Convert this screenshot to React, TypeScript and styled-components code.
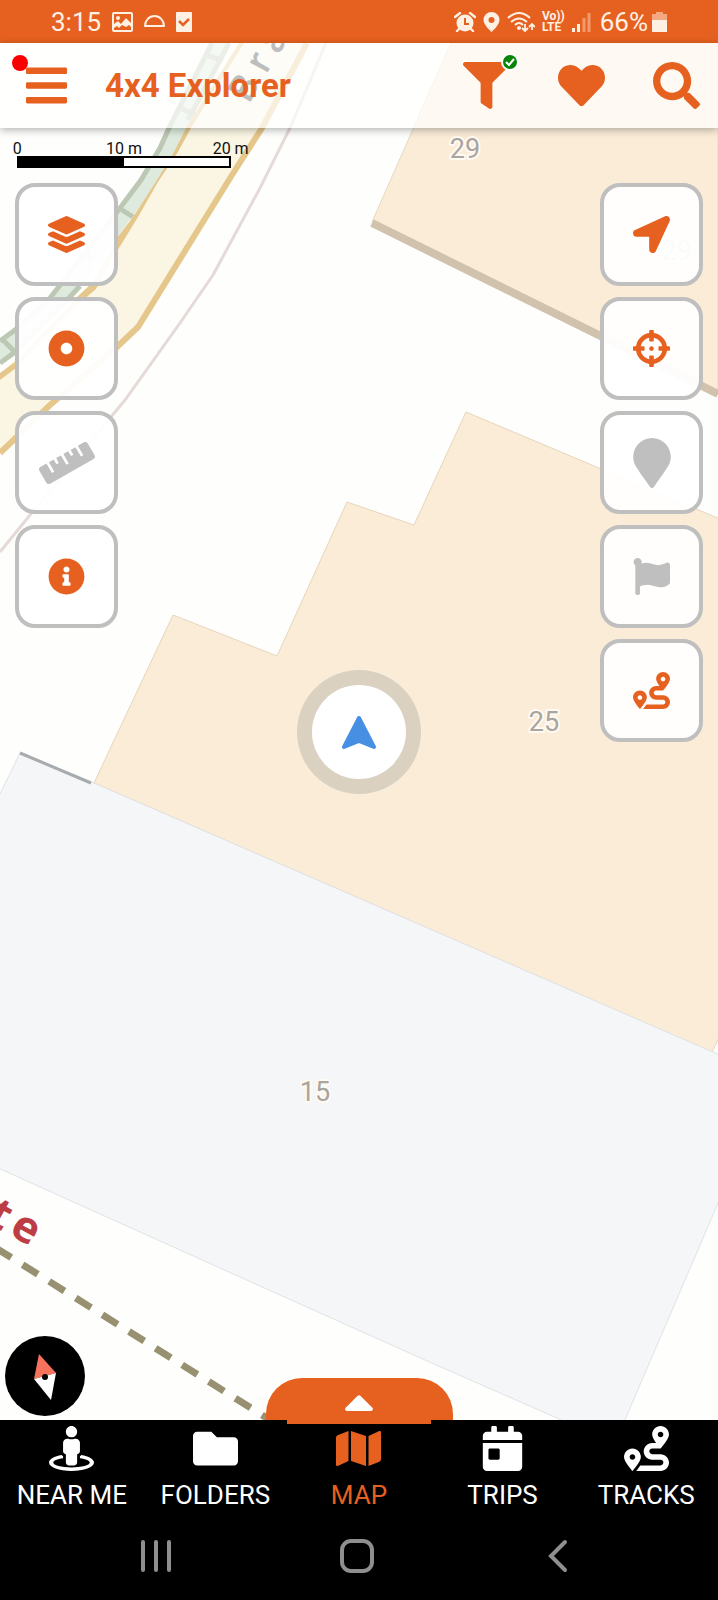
import React from "react";
import styled, { createGlobalStyle } from "styled-components";
import {
  FaBars,
  FaCalendarDay,
  FaCaretUp,
  FaCrosshairs,
  FaDotCircle,
  FaFilter,
  FaFlag,
  FaFolder,
  FaHeart,
  FaInfoCircle,
  FaLayerGroup,
  FaLocationArrow,
  FaMap,
  FaMapMarker,
  FaRoute,
  FaRuler,
  FaSearch,
  FaStreetView,
} from "react-icons/fa";
import type { IconType } from "react-icons";

const ORANGE = "#e66120";
const GREY = "#bfbfbf";

const GlobalStyle = createGlobalStyle`
  * { box-sizing: border-box; }
  body { margin: 0; background: #000; font-family: Roboto, "Noto Sans", sans-serif; }
  button { margin: 0; padding: 0; border: 0; background: none; font: inherit; color: inherit; cursor: pointer; }
  svg { display: block; flex: none; }
`;

const Screen = styled.div`
  display: flex;
  flex-direction: column;
  min-height: 100vh;
`;

/* ---------- status bar ---------- */

const StatusBar = styled.div`
  display: flex;
  align-items: center;
  justify-content: space-between;
  height: 43px;
  padding: 0 51px;
  background: ${ORANGE};
  color: #fff0e4;
  font-size: 26px;
`;

const StatusGroup = styled.div<{ $gap: number }>`
  display: flex;
  align-items: center;
  gap: ${(p) => p.$gap}px;
`;

const Volte = styled.span`
  display: flex;
  flex-direction: column;
  font-size: 12px;
  line-height: 11px;
  font-weight: 700;
`;

const Battery = styled.span`
  display: flex;
  align-items: center;
  gap: 4px;
  margin-left: 2px;
`;

/* ---------- map area ---------- */

const MapArea = styled.main`
  position: relative;
  display: flex;
  flex-direction: column;
  flex: 1;
  background: #fefefc;
`;

const MapCanvas = styled.svg`
  position: absolute;
  inset: 0;
  width: 100%;
  height: 100%;
`;

const Header = styled.header`
  position: relative;
  display: flex;
  align-items: center;
  height: 85px;
  padding: 0 18px 0 23px;
  background: rgba(255, 255, 255, 0.7);
  box-shadow: 0 2px 8px rgba(0, 0, 0, 0.3);
  color: ${ORANGE};
`;

const HeaderButton = styled.button`
  position: relative;
  display: flex;
  color: ${ORANGE};
`;

const Title = styled.h1`
  flex: 1;
  margin: 0 0 0 35px;
  font-size: 33px;
  line-height: 40px;
  font-weight: 700;
`;

const HeaderActions = styled.div`
  display: flex;
  gap: 48px;
`;

const UnreadDot = styled.span`
  position: absolute;
  top: -7px;
  left: -11px;
  width: 16px;
  height: 16px;
  border-radius: 50%;
  background: #fb0000;
`;

const ActiveBadge = styled.svg`
  position: absolute;
  top: -9px;
  right: -9px;
`;

const ScaleBar = styled.div`
  position: relative;
  width: 214px;
  margin: 11px 0 0 17px;
`;

const ScaleLabels = styled.div`
  display: grid;
  grid-template-columns: repeat(3, 1fr);
  height: 17px;
  margin: 0 -53px;
  font-size: 16px;
  line-height: 20px;
  text-align: center;
  color: #111;
`;

const ScaleTrack = styled.div`
  height: 12px;
  border: 2px solid #000;
  background: linear-gradient(90deg, #000 50%, #fff 50%);
`;

const Tools = styled.div`
  position: relative;
  display: flex;
  flex: 1;
  justify-content: space-between;
  padding: 15px 15px 0;
`;

const ToolColumn = styled.div`
  display: flex;
  flex-direction: column;
  gap: 11px;
`;

const ToolButton = styled.button<{ $muted?: boolean }>`
  display: flex;
  align-items: center;
  justify-content: center;
  width: 103px;
  height: 103px;
  border: 4px solid ${GREY};
  border-radius: 20px;
  background: rgba(255, 255, 255, 0.95);
  color: ${(p) => (p.$muted ? GREY : ORANGE)};
`;

const MapFooter = styled.div`
  position: relative;
  display: grid;
  grid-template-columns: 1fr auto 1fr;
  align-items: end;
`;

const CompassButton = styled.button`
  width: 80px;
  height: 80px;
  margin: 0 0 4px 5px;
`;

const PeekButton = styled.button`
  position: relative;
  display: flex;
  justify-content: center;
  width: 187px;
  height: 42px;
  border-radius: 36px 36px 0 0;
  background: ${ORANGE};
  color: #fff;

  &::after {
    content: "";
    position: absolute;
    top: 100%;
    left: 21px;
    right: 22px;
    height: 4px;
    background: ${ORANGE};
  }
`;

/* ---------- bottom bars ---------- */

const TabBar = styled.nav`
  display: grid;
  grid-template-columns: repeat(5, 1fr);
  padding-top: 6px;
  background: #000;
`;

const Tab = styled.a<{ $active?: boolean }>`
  display: flex;
  flex-direction: column;
  align-items: center;
  gap: 8px;
  color: ${(p) => (p.$active ? ORANGE : "#fff")};
  font-size: 26px;
  line-height: 32px;
  text-decoration: none;
  white-space: nowrap;
`;

const SystemBar = styled.div`
  display: flex;
  align-items: center;
  justify-content: center;
  gap: 165px;
  height: 89px;
  padding-right: 4px;
  background: #000;
  color: #8f8f8f;
`;

/* ---------- drawings ---------- */

const MAP_LETTERS = [
  { ch: "B", x: 244, y: 88 },
  { ch: "r", x: 259, y: 62 },
  { ch: "a", x: 273, y: 40 },
];

const HOUSE_NUMBERS = [
  { n: "29", x: 465, y: 158 },
  { n: "29", x: 677, y: 260 },
  { n: "25", x: 544, y: 731 },
  { n: "15", x: 315, y: 1101 },
];

function MapDrawing() {
  return (
    <MapCanvas viewBox="0 43 718 1377" preserveAspectRatio="xMidYMid slice" aria-hidden="true">
      <path
        d="M212 43L168 128L160 148L140 180L119 208L50 298L15 330L0 340V364L15 353L68 299L80 286L133 216L165 170L187 128L230 43Z"
        fill="#deeadd"
      />
      <g fill="none" stroke="#bcc8b3" strokeWidth="5">
        <path d="M212 43L169 128L160 148L141 180L120 208L50 298L15 330L0 341" />
        <path d="M229 43L188 120M80 286L68 299L15 352L0 363" />
        <path d="M208 56L223 60M182 109L196 115M119 208L133 217M84 250L92 260M3 340L15 352" />
      </g>
      <path
        d="M241 43L189 128L180 150L165 172L134 222L118 245L93 287L80 299L0 374V452L50 405L117 347L138 327L232 175L262 128L307 43Z"
        fill="#faf6e3"
      />
      <path
        d="M239 43L186 128L174 152L157 180L133 217L116 239L91 284L78 296L15 362L0 373V380L16 368L82 301L96 289L119 248L138 217L158 182L178 152L191 128L244 43Z"
        fill="#e5c78b"
      />
      <path
        d="M307 43L262 128L232 175L138 327L117 347L50 405L0 453"
        fill="none"
        stroke="#e5c78b"
        strokeWidth="6"
      />
      <path
        d="M326 43L290 128L260 188L213 275L180 323L125 400L30 515L0 552"
        fill="none"
        stroke="#e5dad7"
        strokeWidth="3"
      />
      <g fill="#fbecd8">
        <path d="M451 43L372 222L718 395V43Z" stroke="#e6d8c2" />
        <path
          d="M466 412L414 525L347 502L277 656L173 615L94 783L712 1052L720 1036V519Z"
          stroke="#e6d5bb"
        />
      </g>
      <path d="M372 223L718 394" stroke="#d0c2ad" strokeWidth="8" />
      <path
        d="M20 753L94 783L722 1056V1194L624 1422H566L425 1360L280 1295L-2 1168V798Z"
        fill="#f4f6f8"
        stroke="#e0e2e5"
      />
      <path d="M20 753L91 783" stroke="#a6abad" strokeWidth="3" />
      <path d="M-4 1248L270 1420" stroke="#979171" strokeWidth="7" strokeDasharray="18 13.4" />

      <g
        fill="#222"
        stroke="#222"
        strokeWidth="1"
        fontSize="36"
        fontFamily="Noto Sans, sans-serif"
        textAnchor="middle"
      >
        {MAP_LETTERS.map((l) => (
          <text key={l.ch} transform={`translate(${l.x} ${l.y}) rotate(-61)`} y="12">
            {l.ch}
          </text>
        ))}
      </g>
      <g fill="#bd3d45" fontSize="44" fontWeight="700" fontFamily="Noto Sans, sans-serif" textAnchor="middle">
        <text transform="translate(1 1214) rotate(29)" y="15">t</text>
        <text transform="translate(25 1230) rotate(29)" y="12">e</text>
      </g>
      <g
        fill="#aaa59f"
        stroke="#fffaf2"
        strokeWidth="4"
        strokeLinejoin="round"
        paintOrder="stroke"
        fontSize="27"
        textAnchor="middle"
      >
        {HOUSE_NUMBERS.map((h) => (
          <text key={`${h.n}-${h.x}`} x={h.x} y={h.y}>
            {h.n}
          </text>
        ))}
      </g>

      <circle cx="359" cy="732" r="62" fill="#dad1c1" />
      <circle cx="359" cy="732" r="47" fill="#fff" />
      <path
        d="M359 718L374 747L359 741L344 747Z"
        fill="#478fe2"
        stroke="#478fe2"
        strokeWidth="4"
        strokeLinejoin="round"
      />
    </MapCanvas>
  );
}

function Compass() {
  return (
    <svg width="80" height="80" viewBox="0 0 80 80" aria-hidden="true">
      <circle cx="40" cy="40" r="40" fill="#000" />
      <path d="M34 18L51 37L29 43Z" fill="#f5735c" />
      <path d="M51 37L46 64L29 43Z" fill="#fff" />
      <circle cx="40" cy="41" r="3" fill="#000" />
    </svg>
  );
}

function NoticeIcons() {
  return (
    <>
      <svg width="21" height="20" viewBox="0 0 21 20" aria-hidden="true">
        <rect x="1" y="1" width="19" height="18" rx="1" fill="none" stroke="currentColor" strokeWidth="2" />
        <path d="M2 12L6 9L9 12L14 6L19 11V15L17 13L14 15L10 13L7 16L5 14L2 16Z" fill="currentColor" />
        <circle cx="6" cy="6" r="2" fill="currentColor" />
      </svg>
      <svg width="21" height="20" viewBox="0 0 21 20" aria-hidden="true">
        <path d="M1 14A9.500 10 0 0 1 20 14Z" fill="none" stroke="currentColor" strokeWidth="2" strokeLinejoin="round" />
      </svg>
      <svg width="16" height="20" viewBox="0 0 16 20" aria-hidden="true">
        <rect width="16" height="20" rx="1" fill="currentColor" />
        <path d="M3 9L7 13L13 7" fill="none" stroke={ORANGE} strokeWidth="2.500" />
      </svg>
    </>
  );
}

function AlarmIcon() {
  return (
    <svg width="22" height="20" viewBox="0 0 22 20" aria-hidden="true">
      <circle cx="11" cy="11" r="8.500" fill="currentColor" />
      <path d="M1 5L6 1M21 5L16 1M3 19L6 16M19 19L16 16" stroke="currentColor" strokeWidth="2.400" strokeLinecap="round" />
      <path d="M11 6V12H15" fill="none" stroke={ORANGE} strokeWidth="2" />
    </svg>
  );
}

function PinIcon() {
  return (
    <svg width="17" height="20" viewBox="0 0 17 20" aria-hidden="true">
      <path
        fillRule="evenodd"
        d="M8.500 0A8 8 0 0 1 16.500 8C16.500 13 8.500 20 8.500 20S.5 13 .5 8A8 8 0 0 1 8.500 0ZM8.500 5A3 3 0 1 0 8.500 11A3 3 0 0 0 8.500 5Z"
        fill="currentColor"
      />
    </svg>
  );
}

function WifiIcon() {
  return (
    <svg width="28" height="20" viewBox="0 0 28 20" aria-hidden="true">
      <g fill="none" stroke="currentColor" strokeWidth="2">
        <path d="M1 6Q12 -4 23 6M4 10Q12 3 20 10M8 13Q12 9 16 13" />
        <path d="M18 12V18M15 16L18 19L21 16M25 18V12M22 15L25 12L28 15" strokeWidth="1.800" />
      </g>
      <circle cx="12" cy="16" r="2" fill="currentColor" />
    </svg>
  );
}

function SignalIcon() {
  return (
    <svg width="19" height="20" viewBox="0 0 19 20" aria-hidden="true">
      <path d="M1.500 20V16M6.500 20V12" stroke="currentColor" strokeWidth="3" />
      <path d="M12 20V6M17 20V1" stroke="currentColor" strokeWidth="3" opacity="0.4" />
    </svg>
  );
}

function BatteryIcon() {
  return (
    <svg width="15" height="20" viewBox="0 0 15 20" aria-hidden="true">
      <path d="M4 0H11V2H15V8H0V2H4Z" fill="currentColor" opacity="0.5" />
      <path d="M0 8H15V20H0Z" fill="currentColor" />
    </svg>
  );
}

/* ---------- data ---------- */

interface Tool {
  label: string;
  icon: IconType;
  size: number;
  muted?: boolean;
}

const LEFT_TOOLS: Tool[] = [
  { label: "Layers", icon: FaLayerGroup, size: 37 },
  { label: "Record", icon: FaDotCircle, size: 37 },
  { label: "Measure", icon: FaRuler, size: 56, muted: true },
  { label: "Information", icon: FaInfoCircle, size: 37 },
];

const RIGHT_TOOLS: Tool[] = [
  { label: "My location", icon: FaLocationArrow, size: 37 },
  { label: "Centre map", icon: FaCrosshairs, size: 37 },
  { label: "Add place", icon: FaMapMarker, size: 50, muted: true },
  { label: "Add flag", icon: FaFlag, size: 37, muted: true },
  { label: "Route", icon: FaRoute, size: 37 },
];

const TABS: { label: string; icon: IconType; active?: boolean }[] = [
  { label: "NEAR ME", icon: FaStreetView },
  { label: "FOLDERS", icon: FaFolder },
  { label: "MAP", icon: FaMap, active: true },
  { label: "TRIPS", icon: FaCalendarDay },
  { label: "TRACKS", icon: FaRoute },
];

function ToolStack({ tools }: { tools: Tool[] }) {
  return (
    <ToolColumn>
      {tools.map(({ label, icon: Icon, size, muted }) => (
        <ToolButton key={label} type="button" aria-label={label} $muted={muted}>
          <Icon size={size} />
        </ToolButton>
      ))}
    </ToolColumn>
  );
}

export default function App() {
  return (
    <Screen>
      <GlobalStyle />
      <StatusBar>
        <StatusGroup $gap={11}>
          <span>3:15</span>
          <NoticeIcons />
        </StatusGroup>
        <StatusGroup $gap={7}>
          <AlarmIcon />
          <PinIcon />
          <WifiIcon />
          <Volte>
            <span>Vo))</span>
            <span>LTE</span>
          </Volte>
          <SignalIcon />
          <Battery>
            66%
            <BatteryIcon />
          </Battery>
        </StatusGroup>
      </StatusBar>

      <MapArea>
        <MapDrawing />
        <Header>
          <HeaderButton type="button" aria-label="Menu">
            <FaBars size={47} />
            <UnreadDot />
          </HeaderButton>
          <Title>4x4 Explorer</Title>
          <HeaderActions>
            <HeaderButton type="button" aria-label="Filter">
              <FaFilter size={47} />
              <ActiveBadge width="18" height="18" viewBox="0 0 18 18">
                <circle cx="9" cy="9" r="8" fill="#088408" stroke="#fff" strokeWidth="2" />
                <path d="M5 9L8 12L13 6" fill="none" stroke="#fff" strokeWidth="2" />
              </ActiveBadge>
            </HeaderButton>
            <HeaderButton type="button" aria-label="Favourites">
              <FaHeart size={47} />
            </HeaderButton>
            <HeaderButton type="button" aria-label="Search">
              <FaSearch size={47} />
            </HeaderButton>
          </HeaderActions>
        </Header>

        <ScaleBar>
          <ScaleLabels>
            <span>0</span>
            <span>10 m</span>
            <span>20 m</span>
          </ScaleLabels>
          <ScaleTrack />
        </ScaleBar>

        <Tools>
          <ToolStack tools={LEFT_TOOLS} />
          <ToolStack tools={RIGHT_TOOLS} />
        </Tools>

        <MapFooter>
          <CompassButton type="button" aria-label="Compass">
            <Compass />
          </CompassButton>
          <PeekButton type="button" aria-label="Show panel">
            <FaCaretUp size={48} />
          </PeekButton>
        </MapFooter>
      </MapArea>

      <TabBar>
        {TABS.map(({ label, icon: Icon, active }) => (
          <Tab key={label} href="#" $active={active}>
            <Icon size={45} />
            {label}
          </Tab>
        ))}
      </TabBar>

      <SystemBar>
        <button type="button" aria-label="Recent apps">
          <svg width="36" height="36" viewBox="0 0 36 36" aria-hidden="true">
            <path d="M5 4V32M18 4V32M31 4V32" stroke="currentColor" strokeWidth="4" strokeLinecap="round" />
          </svg>
        </button>
        <button type="button" aria-label="Home">
          <svg width="36" height="36" viewBox="0 0 36 36" aria-hidden="true">
            <rect x="3" y="3" width="30" height="30" rx="9" fill="none" stroke="currentColor" strokeWidth="4" />
          </svg>
        </button>
        <button type="button" aria-label="Back">
          <svg width="36" height="36" viewBox="0 0 36 36" aria-hidden="true">
            <path d="M25 4L11 18L25 32" fill="none" stroke="currentColor" strokeWidth="4" strokeLinecap="round" />
          </svg>
        </button>
      </SystemBar>
    </Screen>
  );
}
